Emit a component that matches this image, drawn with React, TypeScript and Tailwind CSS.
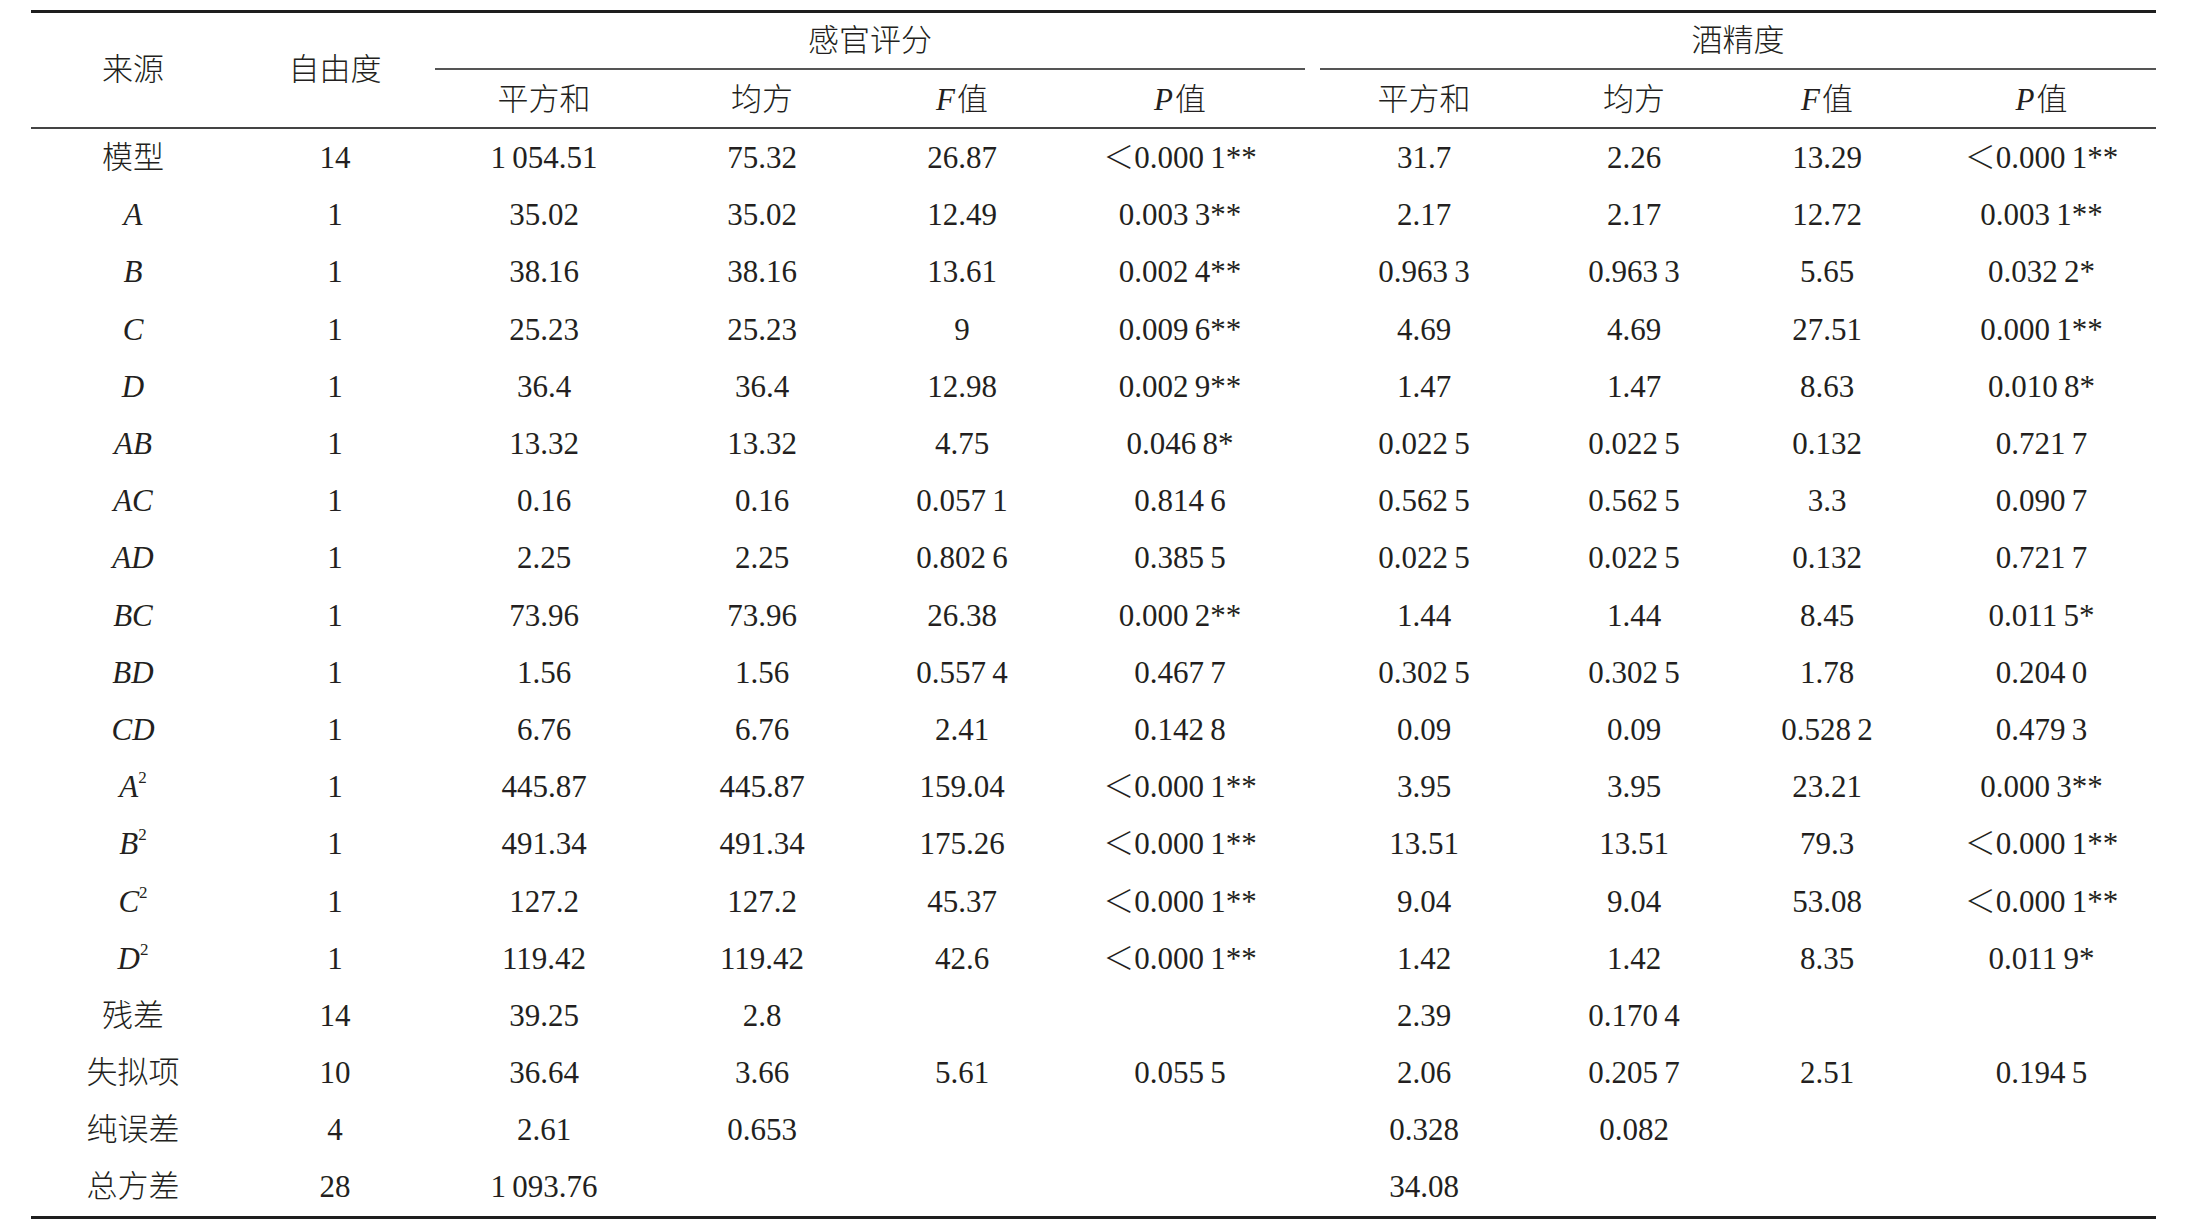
import React from "react";

const T = "\u2009";
const LT = "\uFF1C";

type Row = { src: React.ReactNode; df: string; v: string[] };

const I = ({ c }: { c: string }) => <span className="italic">{c}</span>;
const Sq = ({ c }: { c: string }) => (
  <span className="inline-flex items-start">
    <span className="italic">{c}</span>
    <span className="text-[17px] leading-none relative top-[-2px] not-italic">2</span>
  </span>
);

const rows: Row[] = [
  { src: "模型", df: "14", v: [`1${T}054.51`, "75.32", "26.87", `${LT}0.000${T}1**`, "31.7", "2.26", "13.29", `${LT}0.000${T}1**`] },
  { src: <I c="A" />, df: "1", v: ["35.02", "35.02", "12.49", `0.003${T}3**`, "2.17", "2.17", "12.72", `0.003${T}1**`] },
  { src: <I c="B" />, df: "1", v: ["38.16", "38.16", "13.61", `0.002${T}4**`, `0.963${T}3`, `0.963${T}3`, "5.65", `0.032${T}2*`] },
  { src: <I c="C" />, df: "1", v: ["25.23", "25.23", "9", `0.009${T}6**`, "4.69", "4.69", "27.51", `0.000${T}1**`] },
  { src: <I c="D" />, df: "1", v: ["36.4", "36.4", "12.98", `0.002${T}9**`, "1.47", "1.47", "8.63", `0.010${T}8*`] },
  { src: <I c="AB" />, df: "1", v: ["13.32", "13.32", "4.75", `0.046${T}8*`, `0.022${T}5`, `0.022${T}5`, "0.132", `0.721${T}7`] },
  { src: <I c="AC" />, df: "1", v: ["0.16", "0.16", `0.057${T}1`, `0.814${T}6`, `0.562${T}5`, `0.562${T}5`, "3.3", `0.090${T}7`] },
  { src: <I c="AD" />, df: "1", v: ["2.25", "2.25", `0.802${T}6`, `0.385${T}5`, `0.022${T}5`, `0.022${T}5`, "0.132", `0.721${T}7`] },
  { src: <I c="BC" />, df: "1", v: ["73.96", "73.96", "26.38", `0.000${T}2**`, "1.44", "1.44", "8.45", `0.011${T}5*`] },
  { src: <I c="BD" />, df: "1", v: ["1.56", "1.56", `0.557${T}4`, `0.467${T}7`, `0.302${T}5`, `0.302${T}5`, "1.78", `0.204${T}0`] },
  { src: <I c="CD" />, df: "1", v: ["6.76", "6.76", "2.41", `0.142${T}8`, "0.09", "0.09", `0.528${T}2`, `0.479${T}3`] },
  { src: <Sq c="A" />, df: "1", v: ["445.87", "445.87", "159.04", `${LT}0.000${T}1**`, "3.95", "3.95", "23.21", `0.000${T}3**`] },
  { src: <Sq c="B" />, df: "1", v: ["491.34", "491.34", "175.26", `${LT}0.000${T}1**`, "13.51", "13.51", "79.3", `${LT}0.000${T}1**`] },
  { src: <Sq c="C" />, df: "1", v: ["127.2", "127.2", "45.37", `${LT}0.000${T}1**`, "9.04", "9.04", "53.08", `${LT}0.000${T}1**`] },
  { src: <Sq c="D" />, df: "1", v: ["119.42", "119.42", "42.6", `${LT}0.000${T}1**`, "1.42", "1.42", "8.35", `0.011${T}9*`] },
  { src: "残差", df: "14", v: ["39.25", "2.8", "", "", "2.39", `0.170${T}4`, "", ""] },
  { src: "失拟项", df: "10", v: ["36.64", "3.66", "5.61", `0.055${T}5`, "2.06", `0.205${T}7`, "2.51", `0.194${T}5`] },
  { src: "纯误差", df: "4", v: ["2.61", "0.653", "", "", "0.328", "0.082", "", ""] },
  { src: "总方差", df: "28", v: [`1${T}093.76`, "", "", "", "34.08", "", "", ""] },
];

const grid =
  "grid grid-cols-[204px_200px_218px_218px_182px_254px_234px_186px_200px_229px]";

const Sub = () => (
  <>
    <div className="flex items-center justify-center pt-[2px]">平方和</div>
    <div className="flex items-center justify-center pt-[2px]">均方</div>
    <div className="flex items-center justify-center pt-[2px]">
      <span className="italic">F</span>
      <span className="ml-[2px]">值</span>
    </div>
    <div className="flex items-center justify-center pt-[2px]">
      <span className="italic">P</span>
      <span className="ml-[2px]">值</span>
    </div>
  </>
);

export default function App() {
  return (
    <div
      className="bg-white w-[2193px] h-[1227px] pt-[10px] pl-[31px] text-[#231f20] text-[31px] leading-none font-light"
      style={{ fontFamily: '"Liberation Serif", "Noto Sans CJK SC", serif' }}
    >
      <div className="w-[2125px]">
        <div className="h-[3px] bg-[#1e1e1e]" />
        <div className={`${grid} grid-rows-[57px_57px]`}>
          <div className="row-span-2 flex items-center justify-center pb-[1px]">来源</div>
          <div className="row-span-2 flex items-center justify-center pb-[1px]">自由度</div>
          <div className="col-span-4 flex flex-col mr-[2px]">
            <div className="flex-1 flex items-center justify-center pb-[1px]">感官评分</div>
            <div className="h-[2px] bg-[#555]" />
          </div>
          <div className="col-span-4 flex flex-col ml-[13px]">
            <div className="flex-1 flex items-center justify-center pb-[1px]">酒精度</div>
            <div className="h-[2px] bg-[#555]" />
          </div>
          <Sub />
          <Sub />
        </div>
        <div className="h-[2px] bg-[#444]" />
        <div className="flex flex-col">
          {rows.map((r, i) => (
            <div key={i} className={`${grid} h-[57.2px]`}>
              <div className="flex items-center justify-center">{r.src}</div>
              <div className="flex items-center justify-center">{r.df}</div>
              {r.v.map((c, j) => (
                <div key={j} className="flex items-center justify-center whitespace-pre">
                  {c}
                </div>
              ))}
            </div>
          ))}
        </div>
        <div className="h-[3px] bg-[#1e1e1e]" />
      </div>
    </div>
  );
}
